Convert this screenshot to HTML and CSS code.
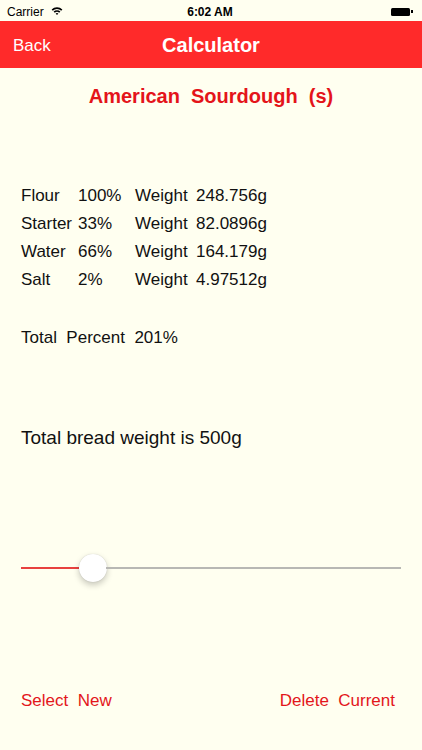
FILE: index.html
```html
<!DOCTYPE html>
<html>
<head>
<meta charset="utf-8">
<link rel="stylesheet" href="styles.css">
</head>
<body>
<div class="page">
  <div class="status">
    <div class="status-left">
      <span class="carrier">Carrier</span>
      <svg class="wifi" width="12" height="10" viewBox="0 0 12 10">
        <path d="M0.6 3.6 A7.6 7.6 0 0 1 11.4 3.6 L10.2 4.8 A5.9 5.9 0 0 0 1.8 4.8 Z" fill="#000"/>
        <path d="M2.6 5.6 A4.8 4.8 0 0 1 9.4 5.6 L8.2 6.8 A3.1 3.1 0 0 0 3.8 6.8 Z" fill="#000"/>
        <path d="M4.6 7.6 A2 2 0 0 1 7.4 7.6 L6 9 Z" fill="#000"/>
      </svg>
    </div>
    <span class="time">6:02 AM</span>
    <div class="status-right">
      <span class="battery"></span><span class="nub"></span>
    </div>
  </div>
  <div class="nav">
    <span class="back">Back</span>
    <span class="nav-title">Calculator</span>
    <span class="nav-spacer"></span>
  </div>
  <h1 class="title">American  Sourdough  (s)</h1>
  <div class="table">
    <span>Flour</span><span>100%</span><span>Weight</span><span>248.756g</span>
    <span>Starter</span><span>33%</span><span>Weight</span><span>82.0896g</span>
    <span>Water</span><span>66%</span><span>Weight</span><span>164.179g</span>
    <span>Salt</span><span>2%</span><span>Weight</span><span>4.97512g</span>
  </div>
  <div class="total">Total  Percent  201%</div>
  <div class="bread">Total bread weight is 500g</div>
  <div class="slider">
    <div class="track-fill"></div>
    <div class="thumb"></div>
    <div class="track-rest"></div>
  </div>
  <div class="actions">
    <span class="action">Select  New</span>
    <span class="action">Delete  Current</span>
  </div>
</div>
</body>
</html>
```
FILE: styles.css
```css
* { box-sizing: border-box; }
html, body {
  margin: 0;
  padding: 0;
  background: #fffff0;
}
body {
  font-family: "Liberation Sans", Arial, Helvetica, sans-serif;
  color: #000;
}
.page {
  width: 422px;
  height: 750px;
  display: flex;
  flex-direction: column;
  background: #fffff0;
  overflow: hidden;
}
.status {
  height: 21px;
  display: flex;
  align-items: center;
  justify-content: space-between;
  padding: 2px 9px 0 7px;
  font-size: 12px;
}
.status-left {
  display: flex;
  align-items: center;
  gap: 7px;
  width: 80px;
}
.wifi { margin-top: -1px; }
.time {
  font-weight: bold;
  font-size: 12px;
}
.status-right {
  width: 80px;
  display: flex;
  justify-content: flex-end;
  align-items: center;
}
.battery {
  width: 19px;
  height: 8px;
  background: #000;
  border-radius: 1.5px;
}
.nub {
  width: 2px;
  height: 3px;
  background: #000;
  margin-left: 1px;
}
.nav {
  height: 47px;
  background: #ff2a2a;
  display: flex;
  align-items: center;
  justify-content: space-between;
  padding: 2px 13px 0 13px;
  color: #fff;
}
.back {
  font-size: 17px;
  width: 70px;
}
.nav-title {
  font-size: 20px;
  font-weight: bold;
}
.nav-spacer { width: 70px; }
.title {
  margin: 16px 0 0 0;
  font-size: 20px;
  line-height: 24px;
  font-weight: bold;
  color: #e4141a;
  text-align: center;
  white-space: pre;
}
.table {
  margin: 74px 0 0 21px;
  display: grid;
  grid-template-columns: 57px 57px 61px auto;
  font-size: 17px;
  line-height: 28px;
  color: #111;
}
.total {
  margin: 30px 0 0 21px;
  font-size: 17px;
  line-height: 28px;
  white-space: pre;
  color: #111;
}
.bread {
  margin: 74px 0 0 21px;
  font-size: 19px;
  line-height: 24px;
  color: #111;
}
.slider {
  margin: 104px 21px 0 21px;
  height: 28px;
  display: flex;
  align-items: center;
}
.track-fill {
  width: 58px;
  height: 2px;
  background: #e8413f;
}
.thumb {
  width: 28px;
  height: 28px;
  border-radius: 50%;
  background: #fff;
  box-shadow: 0 3px 6px rgba(0,0,0,0.22), 0 0 1px rgba(0,0,0,0.2);
  flex: none;
  margin-right: -1px;
}
.track-rest {
  flex: 1;
  height: 2px;
  background: #b8b8b4;
}
.actions {
  margin: 109px 27px 0 21px;
  display: flex;
  justify-content: space-between;
  font-size: 17px;
  line-height: 20px;
  color: #e3161b;
}
.action { white-space: pre; }
```
